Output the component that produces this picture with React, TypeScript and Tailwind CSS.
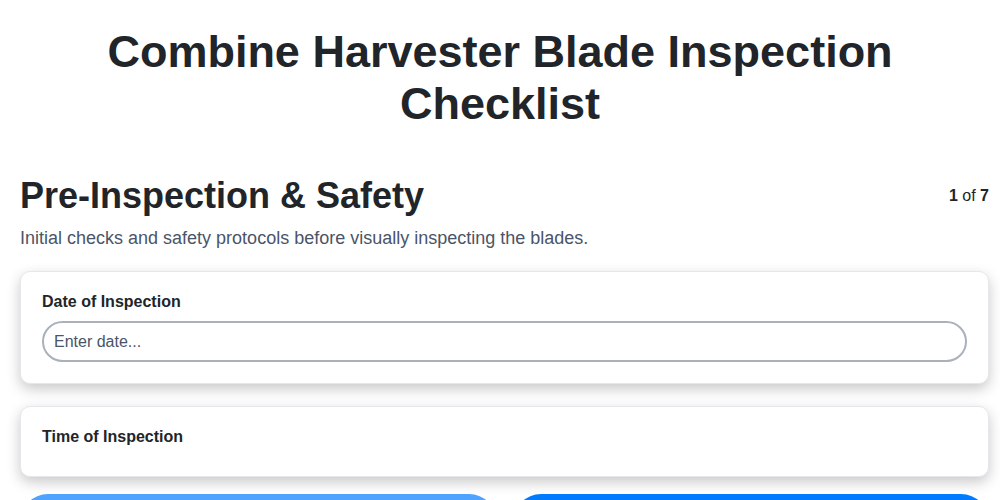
export default function App() {
  return (
    <div className="min-h-screen bg-white font-['Liberation_Sans',Arial,sans-serif] text-[#212529]">
      <h1 className="px-[100px] pt-[26px] text-center text-[45px] font-bold leading-[52px]">
        Combine Harvester Blade Inspection Checklist
      </h1>

      <div className="pl-[20px] pr-[11px] pt-[44px]">
        <div className="flex items-start justify-between">
          <h2 className="text-[36px] font-bold leading-[44px]">Pre-Inspection &amp; Safety</h2>
          <div className="pt-[10px] text-[16px]">
            <span className="font-bold">1</span> of <span className="font-bold">7</span>
          </div>
        </div>
        <p className="mt-[7px] text-[18px] leading-[27px] text-[#4a5568]">
          Initial checks and safety protocols before visually inspecting the blades.
        </p>

        <div className="mt-[19px] flex flex-col">
          <div className="rounded-[10px] border border-[#e5e7eb] bg-white px-[21px] pt-[20px] pb-[21px] shadow-[0_5px_14px_rgba(0,0,0,0.22)]">
            <div className="text-[16px] font-bold leading-[20px]">Date of Inspection</div>
            <input
              placeholder="Enter date..."
              className="mt-[9px] h-[41px] w-full rounded-full border-2 border-[#a9b1bb] px-[10px] text-[16px] text-[#212529] outline-none placeholder:text-[#4a5568]"
            />
          </div>

          <div className="mt-[22px] h-[71px] rounded-[10px] border border-[#e5e7eb] bg-white px-[21px] pt-[20px] shadow-[0_5px_14px_rgba(0,0,0,0.22)]">
            <div className="text-[16px] font-bold leading-[20px]">Time of Inspection</div>
          </div>

          <div className="mt-[17px] flex gap-[16px] pb-[20px]">
            <button className="h-[56px] flex-1 rounded-full bg-[#4da3ff] text-[16px] font-bold text-white">
              Previous
            </button>
            <button className="h-[56px] flex-1 rounded-full bg-[#007bff] text-[16px] font-bold text-white">
              Next
            </button>
          </div>
        </div>
      </div>
    </div>
  );
}
